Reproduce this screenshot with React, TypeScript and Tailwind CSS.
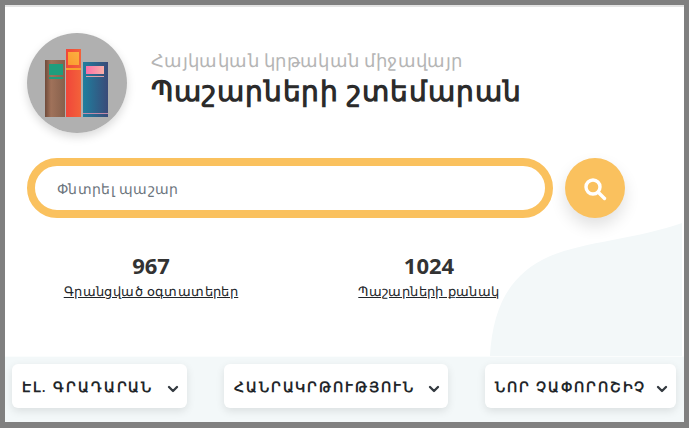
import { ChevronDown } from "lucide-react";

const font = "font-['Open_Sans','Noto_Sans',sans-serif]";

const BookLogo = () => (
  <svg viewBox="0 0 100 100" className="w-[100px] h-[100px]">
    <defs>
      <linearGradient id="brown" x1="0" x2="1" y1="0" y2="0">
        <stop offset="0" stopColor="#6f4a3a" />
        <stop offset="0.3" stopColor="#a0725a" />
        <stop offset="1" stopColor="#86604c" />
      </linearGradient>
      <linearGradient id="red" x1="0" x2="1" y1="0" y2="0">
        <stop offset="0" stopColor="#f0463a" />
        <stop offset="1" stopColor="#f3623a" />
      </linearGradient>
      <linearGradient id="orange" x1="0" x2="1" y1="1" y2="0">
        <stop offset="0" stopColor="#fb9a30" />
        <stop offset="1" stopColor="#fbb040" />
      </linearGradient>
      <linearGradient id="blue" x1="0" x2="1" y1="0" y2="0">
        <stop offset="0" stopColor="#1f7e9e" />
        <stop offset="1" stopColor="#3a4a78" />
      </linearGradient>
      <linearGradient id="pink" x1="0" x2="1" y1="0" y2="0">
        <stop offset="0" stopColor="#fb6fa8" />
        <stop offset="1" stopColor="#f9b0a8" />
      </linearGradient>
    </defs>
    <circle cx="50" cy="50" r="50" fill="#b0b0b0" />
    <rect x="18" y="27" width="20" height="57" fill="url(#brown)" />
    <rect x="22" y="31" width="14" height="11" fill="#1f9d7d" />
    <rect x="22" y="44" width="14" height="2" fill="#1f9d7d" />
    <rect x="39" y="16" width="15" height="68" fill="url(#red)" />
    <rect x="41" y="19" width="11" height="13" fill="url(#orange)" />
    <rect x="39" y="35" width="15" height="2" fill="#f9a02c" />
    <rect x="56" y="29" width="25" height="55" fill="url(#blue)" />
    <rect x="59" y="33" width="18" height="8" fill="url(#pink)" />
    <rect x="59" y="43" width="18" height="1" fill="#e0a0a8" />
    <rect x="56" y="80" width="25" height="1" fill="#c08aa8" />
  </svg>
);

const FilterButton = ({ label, className }: { label: string; className: string }) => (
  <button className={`h-11 bg-white rounded-md shadow-[0_3px_8px_rgba(0,0,0,0.1)] flex items-center justify-between pl-[10px] pr-[6px] text-[14px] font-semibold tracking-[1.9px] text-[#212529] ${className}`}>
    <span>{label}</span>
    <ChevronDown size={16} strokeWidth={3.5} className="text-[#343a40] mt-[5px]" />
  </button>
);

export default function App() {
  return (
    <div className={`w-[689px] h-[428px] bg-[#808080] p-[5px] ${font}`}>
      <div className="relative w-[679px] h-[417px] bg-white border-t-2 border-[#e4e4e4] flex flex-col overflow-hidden">
        <svg viewBox="0 0 195 135" className="absolute right-0 top-[216px] w-[196px] h-[133px]">
          <path d="M0 135C3 85 20 52 60 34C95 19 150 16 195 0V135Z" fill="#f3f8f9" />
        </svg>

        <div className="relative flex items-center gap-6 pl-[22px] pt-[26px]">
          <div className="rounded-full shadow-[0_4px_10px_rgba(0,0,0,0.15)]">
            <BookLogo />
          </div>
          <div className="-mt-[10px]">
            <div className="text-[18px] leading-6 tracking-[0.36px] text-[#b5b5b5]">Հայկական կրթական միջավայր</div>
            <div className="text-[28px] leading-[36px] tracking-[0.92px] font-bold text-[#2b2b2b]">Պաշարների շտեմարան</div>
          </div>
        </div>

        <div className="relative flex items-center gap-3 pl-[22px] mt-[25px]">
          <div className="w-[526px] h-[60px] rounded-[30px] border-8 border-[#fac15e] bg-white flex items-center pl-[22px] text-[14px] tracking-[0.35px] text-[#6c757d]">
            Փնտրել պաշար
          </div>
          <div className="w-[60px] h-[60px] rounded-full bg-[#fac15e] shadow-[0_8px_16px_rgba(0,0,0,0.12)] flex items-center justify-center">
            <svg viewBox="0 0 24 24" className="w-6 h-6 mt-[2px]" fill="none" stroke="white" strokeWidth="3.4" strokeLinecap="round">
              <circle cx="10" cy="10" r="7" />
              <path d="M15.5 15.5L21.5 21.5" />
            </svg>
          </div>
        </div>

        <div className="relative grid grid-cols-[278px_278px] ml-[7px] mt-[33px]">
          <div className="flex flex-col items-center">
            <div className="text-[22px] leading-7 font-bold text-[#333]">967</div>
            <a className="text-[13px] leading-6 tracking-[0.4px] underline text-[#212529]">Գրանցված օգտատերեր</a>
          </div>
          <div className="flex flex-col items-center">
            <div className="text-[22px] leading-7 font-bold text-[#333]">1024</div>
            <a className="text-[13px] leading-6 tracking-[0.4px] underline text-[#212529]">Պաշարների քանակ</a>
          </div>
        </div>

        <div className="relative mt-auto h-[66px] bg-[#f3f8f9] border-t border-[#fbfdfd] flex items-start pt-[7px] pl-[7px]">
          <FilterButton label="ԷԼ. ԳՐԱԴԱՐԱՆ" className="w-[175px]" />
          <FilterButton label="ՀԱՆՐԱԿՐԹՈՒԹՅՈՒՆ" className="w-[224px] ml-[37px]" />
          <FilterButton label="ՆՈՐ ՉԱՓՈՐՈՇԻՉ" className="w-[191px] ml-[37px]" />
        </div>
      </div>
    </div>
  );
}
